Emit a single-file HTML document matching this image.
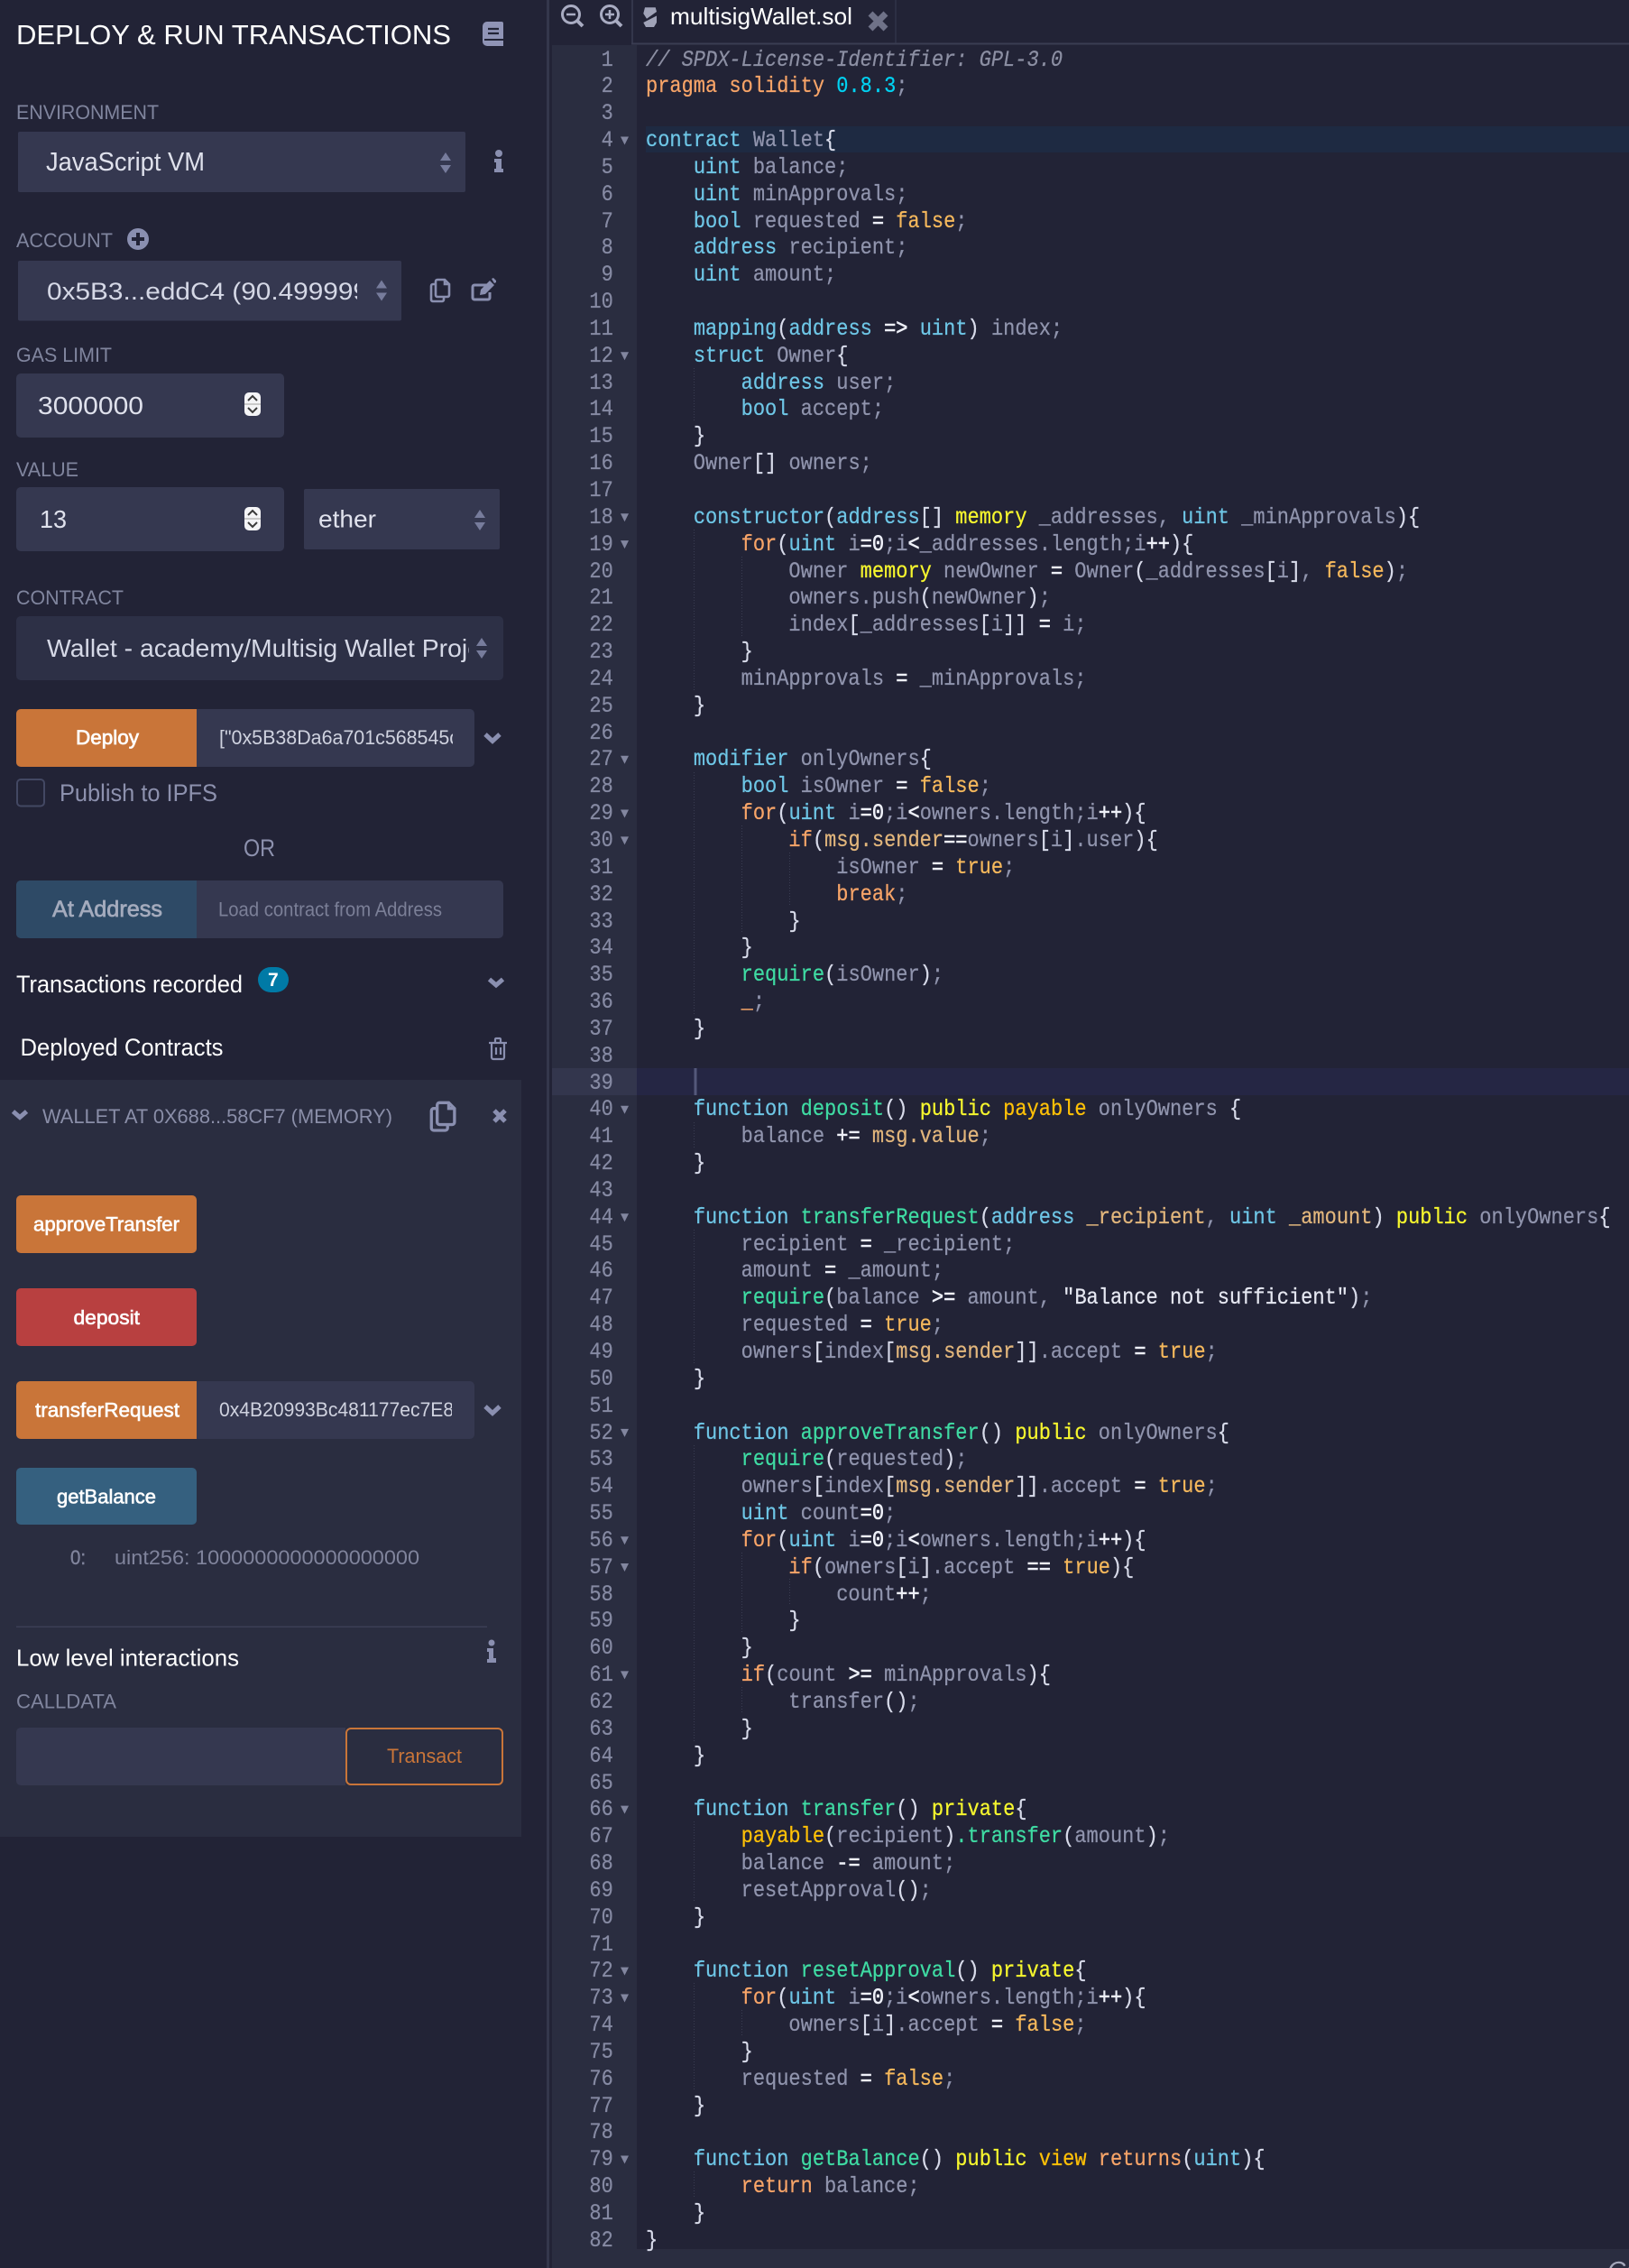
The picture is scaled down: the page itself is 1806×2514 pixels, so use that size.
<!DOCTYPE html>
<html><head><meta charset="utf-8"><title>Remix</title>
<style>
html,body{margin:0;padding:0;background:#222336}
body{position:relative;width:1806px;height:2514px;overflow:hidden}
svg.ui{position:absolute;left:0;top:0}
svg.ui text{font-family:"Liberation Sans",sans-serif;white-space:pre}
pre{margin:0;position:absolute;font:25px/29.84px "Liberation Mono",monospace;color:#9094ad;-webkit-text-stroke:.25px currentColor;transform-origin:0 0;transform:scaleX(.88)}
#code{left:716px;top:51.5px}
#nums{left:620px;top:51.5px;width:68px;text-align:right;color:#868aa3}
k{color:#6ec6e6}w{color:#d8dbea}o{color:#eef0f8;-webkit-text-stroke:.6px currentColor}f{color:#f5b85c}y{color:#f6f62e}z{color:#ffc107}g{color:#3fdba3}r{color:#f7a468}c{color:#00d2f2}t{color:#e2b67c}i{color:#8c8fa3;font-style:italic}s{color:#e6e8f2;text-decoration:none}
</style></head><body>
<svg class="ui" width="1806" height="2514" viewBox="0 0 1806 2514" xmlns="http://www.w3.org/2000/svg">
<defs>
<clipPath id="c1"><rect x="40" y="290" width="356" height="60"/></clipPath>
<clipPath id="c2"><rect x="40" y="690" width="480" height="60"/></clipPath>
<clipPath id="c3"><rect x="240" y="790" width="262" height="60"/></clipPath>
<clipPath id="c4"><rect x="240" y="1535" width="261" height="60"/></clipPath>
<g id="copy" fill="none" stroke="#8a8fb0" stroke-width="2.6"><path d="M8 1h8l5 5v12a2 2 0 0 1-2 2H8a2 2 0 0 1-2-2V3a2 2 0 0 1 2-2z"/><path d="M6 6H3a2 2 0 0 0-2 2v15a2 2 0 0 0 2 2h10a2 2 0 0 0 2-2v-3"/><path d="M16 1v5h5"/></g>
<g id="ud"><path d="M6 0l6 9H0z M0 14h12l-6 9z" fill="#777c9c"/></g>
<g id="spin"><rect width="18" height="26" rx="5" fill="#f4f4f6"/><path d="M4 9l5-5 5 5M4 17l5 5 5-5" fill="none" stroke="#3a3a3a" stroke-width="2"/><path d="M0 13h18" stroke="#bbb" stroke-width="1.5"/></g>
</defs>

<!-- panel -->
<rect x="0" y="1197" width="578" height="839" fill="#2a2d40"/>

<!-- title -->
<text x="18" y="49" font-size="31" fill="#fff" textLength="482" lengthAdjust="spacingAndGlyphs">DEPLOY &amp; RUN TRANSACTIONS</text>
<path d="M540 24h16a2 2 0 0 1 2 2v25h-18a5 5 0 0 1-5-5V29a5 5 0 0 1 5-5z" fill="#9094b6"/>
<path d="M541 32h12M541 37h12" stroke="#222336" stroke-width="2.2"/><path d="M537 44h21" stroke="#222336" stroke-width="2"/>

<!-- environment -->
<text x="18" y="132" font-size="22" fill="#80859e" textLength="158" lengthAdjust="spacingAndGlyphs">ENVIRONMENT</text>
<rect x="20" y="146" width="496" height="67" rx="2" fill="#353850"/>
<text x="51" y="189" font-size="28.5" fill="#dfe1ec" textLength="176" lengthAdjust="spacingAndGlyphs">JavaScript VM</text>
<use href="#ud" x="488" y="169"/>
<circle cx="553" cy="170" r="4" fill="#8a8fb0"/><path d="M548 176h8v11h2v4h-10v-4h2v-7h-2z" fill="#8a8fb0"/>

<!-- account -->
<text x="18" y="274" font-size="22" fill="#80859e" textLength="107" lengthAdjust="spacingAndGlyphs">ACCOUNT</text>
<circle cx="153" cy="265" r="12" fill="#8a8fb0"/><path d="M146 265h14M153 258v14" stroke="#222336" stroke-width="4"/>
<rect x="20" y="289" width="425" height="66.5" rx="2" fill="#353850"/>
<text x="52" y="332" font-size="27" fill="#d5d8e6" clip-path="url(#c1)" textLength="356" lengthAdjust="spacingAndGlyphs">0x5B3...eddC4 (90.499999</text>
<use href="#ud" x="417" y="310.5"/>
<use href="#copy" x="477" y="309"/>
<path d="M541 316h-15a2 2 0 0 0-2 2v12a2 2 0 0 0 2 2h15a2 2 0 0 0 2-2v-6" fill="none" stroke="#8a8fb0" stroke-width="3"/>
<path d="M532 327l1-6 10-10 5 5-10 10zM545 309l2-1 3 3 0 2-2 1z" fill="#8a8fb0"/>

<!-- gas -->
<text x="18" y="401" font-size="22" fill="#80859e" textLength="106" lengthAdjust="spacingAndGlyphs">GAS LIMIT</text>
<rect x="18" y="414" width="297" height="71" rx="5" fill="#353850"/>
<text x="42" y="459" font-size="28" fill="#dfe1ec" textLength="117" lengthAdjust="spacingAndGlyphs">3000000</text>
<use href="#spin" x="271" y="435"/>

<!-- value -->
<text x="18" y="528" font-size="22" fill="#80859e" textLength="69" lengthAdjust="spacingAndGlyphs">VALUE</text>
<rect x="18" y="540" width="297" height="71" rx="5" fill="#353850"/>
<text x="44" y="585" font-size="28" fill="#dfe1ec" textLength="30" lengthAdjust="spacingAndGlyphs">13</text>
<use href="#spin" x="271" y="562"/>
<rect x="337" y="542" width="217" height="67" rx="2" fill="#353850"/>
<text x="353" y="584.5" font-size="27" fill="#dfe1ec" textLength="64" lengthAdjust="spacingAndGlyphs">ether</text>
<use href="#ud" x="526" y="565"/>

<!-- contract -->
<text x="18" y="670" font-size="22" fill="#80859e" textLength="119" lengthAdjust="spacingAndGlyphs">CONTRACT</text>
<rect x="18" y="683" width="540" height="71" rx="5" fill="#2d3046"/>
<text x="52" y="728" font-size="28" fill="#d5d8e6" clip-path="url(#c2)" textLength="482" lengthAdjust="spacingAndGlyphs">Wallet - academy/Multisig Wallet Proje</text>
<use href="#ud" x="528" y="707"/>

<!-- deploy -->
<rect x="18" y="786" width="508" height="64" rx="5" fill="#353850"/>
<path d="M23 786h195v64H23a5 5 0 0 1-5-5v-54a5 5 0 0 1 5-5z" fill="#c97539"/>
<text x="84" y="825" font-size="22.5" fill="#fff" stroke="#fff" stroke-width=".7" textLength="70" lengthAdjust="spacingAndGlyphs">Deploy</text>
<text x="243" y="825" font-size="22" fill="#cfd2df" clip-path="url(#c3)" textLength="266" lengthAdjust="spacingAndGlyphs">["0x5B38Da6a701c568545c</text>
<path d="M538 814l8 7.500 8-7.500" fill="none" stroke="#8a8fb0" stroke-width="5"/>

<rect x="19" y="864" width="30" height="29.5" rx="4" fill="none" stroke="#434863" stroke-width="2"/>
<text x="66" y="888" font-size="27" fill="#8d91ae" textLength="175" lengthAdjust="spacingAndGlyphs">Publish to IPFS</text>
<text x="270" y="949" font-size="27" fill="#8d91ae" textLength="35" lengthAdjust="spacingAndGlyphs">OR</text>

<!-- at address -->
<rect x="18" y="976" width="540" height="64" rx="5" fill="#353850"/>
<path d="M23 976h195v64H23a5 5 0 0 1-5-5v-54a5 5 0 0 1 5-5z" fill="#2e4a66"/>
<text x="58" y="1016" font-size="25" fill="#a4abbd" stroke="#a4abbd" stroke-width=".7" textLength="122" lengthAdjust="spacingAndGlyphs">At Address</text>
<text x="242" y="1015.5" font-size="22" fill="#7b7f97" textLength="248" lengthAdjust="spacingAndGlyphs">Load contract from Address</text>

<!-- transactions -->
<text x="18" y="1100" font-size="27" fill="#fff" textLength="251" lengthAdjust="spacingAndGlyphs">Transactions recorded</text>
<rect x="286" y="1072" width="34" height="28" rx="14" fill="#007aa6"/>
<text x="297" y="1093" font-size="21" font-weight="bold" fill="#fff">7</text>
<path d="M542.500 1085.500l7.500 6.500 7.500-6.500" fill="none" stroke="#8a8fb0" stroke-width="5"/>

<text x="22.5" y="1170" font-size="27" fill="#fff" textLength="225" lengthAdjust="spacingAndGlyphs">Deployed Contracts</text>
<path d="M542 1156h20M549 1156v-4a1 1 0 0 1 1-1h4a1 1 0 0 1 1 1v4M545 1156v16a2 2 0 0 0 2 2h10a2 2 0 0 0 2-2v-16M550 1161v8M555 1161v8" fill="none" stroke="#8a8fb0" stroke-width="2.2"/>

<!-- wallet header -->
<path d="M14.500 1232l7.500 6.500 7.500-6.500" fill="none" stroke="#8a8fb0" stroke-width="5"/>
<text x="47" y="1245" font-size="22" fill="#8a8ea8" textLength="388" lengthAdjust="spacingAndGlyphs">WALLET AT 0X688...58CF7 (MEMORY)</text>
<use href="#copy" transform="translate(477 1221) scale(1.28)"/>
<path d="M548 1231l12 12M560 1231l-12 12" stroke="#8a8fb0" stroke-width="5"/>

<!-- function buttons -->
<rect x="18" y="1325" width="200" height="64" rx="5" fill="#c97539"/>
<text x="37" y="1364.500" font-size="22" fill="#fff" stroke="#fff" stroke-width=".6" textLength="162" lengthAdjust="spacingAndGlyphs">approveTransfer</text>
<rect x="18" y="1428" width="200" height="64" rx="5" fill="#b84040"/>
<text x="81.5" y="1468" font-size="22" fill="#fff" stroke="#fff" stroke-width=".6" textLength="73.500" lengthAdjust="spacingAndGlyphs">deposit</text>
<rect x="18" y="1531" width="508" height="64" rx="5" fill="#353850"/>
<path d="M23 1531h195v64H23a5 5 0 0 1-5-5v-54a5 5 0 0 1 5-5z" fill="#c97539"/>
<text x="39" y="1570.500" font-size="22" fill="#fff" stroke="#fff" stroke-width=".6" textLength="160" lengthAdjust="spacingAndGlyphs">transferRequest</text>
<text x="243" y="1570" font-size="22" fill="#cfd2df" clip-path="url(#c4)" textLength="266" lengthAdjust="spacingAndGlyphs">0x4B20993Bc481177ec7E8f</text>
<path d="M538 1559l8 7.500 8-7.500" fill="none" stroke="#8a8fb0" stroke-width="5"/>
<rect x="18" y="1627" width="200" height="63" rx="5" fill="#35607f"/>
<text x="63" y="1666.500" font-size="22" fill="#fff" stroke="#fff" stroke-width=".6" textLength="110" lengthAdjust="spacingAndGlyphs">getBalance</text>
<text x="78" y="1734" font-size="22" fill="#80849c" stroke="#80849c" stroke-width=".4" textLength="17" lengthAdjust="spacingAndGlyphs">0:</text>
<text x="127" y="1734" font-size="22" fill="#80849c" textLength="338" lengthAdjust="spacingAndGlyphs">uint256: 1000000000000000000</text>

<rect x="18" y="1802.500" width="522" height="1.500" fill="#3c3f55"/>
<text x="18" y="1846.500" font-size="26" fill="#fff" textLength="247" lengthAdjust="spacingAndGlyphs">Low level interactions</text>
<circle cx="545" cy="1821" r="3.500" fill="#8a8fb0"/><path d="M540 1827h7v11h3v5h-10v-4h2v-8h-2z" fill="#8a8fb0"/>
<text x="18" y="1893.500" font-size="22" fill="#80859e" textLength="111" lengthAdjust="spacingAndGlyphs">CALLDATA</text>
<path d="M23 1915h360v64H23a5 5 0 0 1-5-5v-54a5 5 0 0 1 5-5z" fill="#353850"/>
<rect x="384" y="1916" width="173" height="62" rx="5" fill="#2a2d40" stroke="#c97539" stroke-width="2"/>
<text x="429" y="1954" font-size="22" fill="#c97539" textLength="83" lengthAdjust="spacingAndGlyphs">Transact</text>

<!-- editor chrome -->
<rect x="606" y="0" width="3" height="2514" fill="#34374c"/>
<rect x="612" y="50" width="94" height="2464" fill="#2a2d40"/>
<rect x="612" y="2493" width="1194" height="21" fill="#2a2d40"/>
<text x="1782" y="2526" font-size="28" font-style="italic" fill="#a4a7ba">Ca</text>
<rect x="700" y="0" width="2" height="49" fill="#33364b"/>
<rect x="992" y="0" width="2" height="49" fill="#2c2f44"/>
<rect x="700" y="47.500" width="1106" height="2" fill="#3a3d52"/>
<g fill="none" stroke="#a9acc2" stroke-width="3">
<circle cx="633" cy="16" r="9.500"/><path d="M640 23l6 6" stroke-width="4"/><path d="M628 16h10" stroke-width="2.500"/>
<circle cx="676" cy="16" r="9.500"/><path d="M683 23l6 6" stroke-width="4"/><path d="M671 16h10M676 11v10" stroke-width="2.500"/>
</g>
<path d="M715 8.300h11.700l1.300 4.700-11 7.700-3.700-5.700zM713.300 25l14.700-7.500v7.500l-3 5h-9z" fill="#a0a3b8"/>
<text x="743" y="27" font-size="26" fill="#fff" textLength="202" lengthAdjust="spacingAndGlyphs">multisigWallet.sol</text>
<path d="M965 15l17 17M982 15l-17 17" stroke="#6f7288" stroke-width="7"/>

<!-- highlights -->
<rect x="716" y="140" width="1090" height="29" fill="#1e2a42"/>
<rect x="612" y="1184" width="94" height="30" fill="#33364d"/>
<rect x="706" y="1184" width="1100" height="30" fill="#26284a" fill-opacity=".7"/>
<rect x="769.500" y="1184" width="3" height="30" fill="#54587a"/>

<!-- indent guides -->
<g stroke="#3a3d52" stroke-width="1" stroke-dasharray="1 2">
<path d="M769.500 408V468M769.500 587V766M769.500 856V1124M769.500 1244V1273M769.500 1363V1512M769.500 1602V1930M769.500 2019V2109M769.500 2198V2318M769.500 2407V2437"/>
<path d="M822.500 617V706M822.500 915V1035M822.500 1721V1810M822.500 1870V1900M822.500 2228V2258"/>
<path d="M875.500 945V1005M875.500 1750V1780"/>
</g>

<!-- fold arrows -->
<g fill="#82869f"><path d="M688 151.500h9l-4.500 9zM688 390.200h9l-4.500 9zM688 569.300h9l-4.500 9zM688 599.100h9l-4.500 9zM688 837.800h9l-4.500 9zM688 897.500h9l-4.500 9zM688 927.400h9l-4.500 9zM688 1225.800h9l-4.500 9zM688 1345.200h9l-4.500 9zM688 1583.900h9l-4.500 9zM688 1703.200h9l-4.500 9zM688 1733h9l-4.500 9zM688 1852.400h9l-4.500 9zM688 2001.600h9l-4.500 9zM688 2180.600h9l-4.500 9zM688 2210.500h9l-4.500 9zM688 2389.500h9l-4.500 9z"/></g>
</svg>

<pre id="nums">1
2
3
4
5
6
7
8
9
10
11
12
13
14
15
16
17
18
19
20
21
22
23
24
25
26
27
28
29
30
31
32
33
34
35
36
37
38
39
40
41
42
43
44
45
46
47
48
49
50
51
52
53
54
55
56
57
58
59
60
61
62
63
64
65
66
67
68
69
70
71
72
73
74
75
76
77
78
79
80
81
82</pre>

<pre id="code"><i>// SPDX-License-Identifier: GPL-3.0</i>
<r>pragma solidity</r> <c>0.8.3</c>;

<k>contract</k> Wallet<w>{</w>
    <k>uint</k> balance;
    <k>uint</k> minApprovals;
    <k>bool</k> requested <o>=</o> <f>false</f>;
    <k>address</k> recipient;
    <k>uint</k> amount;

    <k>mapping</k><w>(</w><k>address</k> <o>=&gt;</o> <k>uint</k><w>)</w> index;
    <k>struct</k> Owner<w>{</w>
        <k>address</k> user;
        <k>bool</k> accept;
    <w>}</w>
    Owner<w>[]</w> owners;

    <k>constructor</k><w>(</w><k>address</k><w>[]</w> <y>memory</y> _addresses, <k>uint</k> _minApprovals<w>){</w>
        <r>for</r><w>(</w><k>uint</k> i<o>=0</o>;i<o>&lt;</o>_addresses.length;i<o>++</o><w>){</w>
            Owner <y>memory</y> newOwner <o>=</o> Owner<w>(</w>_addresses<w>[</w>i<w>]</w>, <f>false</f><w>)</w>;
            owners.push<w>(</w>newOwner<w>)</w>;
            index<w>[</w>_addresses<w>[</w>i<w>]]</w> <o>=</o> i;
        <w>}</w>
        minApprovals <o>=</o> _minApprovals;
    <w>}</w>

    <k>modifier</k> onlyOwners<w>{</w>
        <k>bool</k> isOwner <o>=</o> <f>false</f>;
        <r>for</r><w>(</w><k>uint</k> i<o>=0</o>;i<o>&lt;</o>owners.length;i<o>++</o><w>){</w>
            <r>if</r><w>(</w><t>msg.sender</t><o>==</o>owners<w>[</w>i<w>]</w>.user<w>){</w>
                isOwner <o>=</o> <f>true</f>;
                <r>break</r>;
            <w>}</w>
        <w>}</w>
        <g>require</g><w>(</w>isOwner<w>)</w>;
        <r>_</r>;
    <w>}</w>


    <k>function</k> <g>deposit</g><w>()</w> <y>public</y> <z>payable</z> onlyOwners <w>{</w>
        balance <o>+=</o> <t>msg.value</t>;
    <w>}</w>

    <k>function</k> <g>transferRequest</g><w>(</w><k>address</k> <t>_recipient</t>, <k>uint</k> <t>_amount</t><w>)</w> <y>public</y> onlyOwners<w>{</w>
        recipient <o>=</o> _recipient;
        amount <o>=</o> _amount;
        <g>require</g><w>(</w>balance <o>&gt;=</o> amount, <s>"Balance not sufficient"</s><w>)</w>;
        requested <o>=</o> <f>true</f>;
        owners<w>[</w>index<w>[</w><t>msg.sender</t><w>]]</w>.accept <o>=</o> <f>true</f>;
    <w>}</w>

    <k>function</k> <g>approveTransfer</g><w>()</w> <y>public</y> onlyOwners<w>{</w>
        <g>require</g><w>(</w>requested<w>)</w>;
        owners<w>[</w>index<w>[</w><t>msg.sender</t><w>]]</w>.accept <o>=</o> <f>true</f>;
        <k>uint</k> count<o>=0</o>;
        <r>for</r><w>(</w><k>uint</k> i<o>=0</o>;i<o>&lt;</o>owners.length;i<o>++</o><w>){</w>
            <r>if</r><w>(</w>owners<w>[</w>i<w>]</w>.accept <o>==</o> <f>true</f><w>){</w>
                count<o>++</o>;
            <w>}</w>
        <w>}</w>
        <r>if</r><w>(</w>count <o>&gt;=</o> minApprovals<w>){</w>
            transfer<w>()</w>;
        <w>}</w>
    <w>}</w>

    <k>function</k> <g>transfer</g><w>()</w> <y>private</y><w>{</w>
        <z>payable</z><w>(</w>recipient<w>)</w><g>.transfer</g><w>(</w>amount<w>)</w>;
        balance <o>-=</o> amount;
        resetApproval<w>()</w>;
    <w>}</w>

    <k>function</k> <g>resetApproval</g><w>()</w> <y>private</y><w>{</w>
        <r>for</r><w>(</w><k>uint</k> i<o>=0</o>;i<o>&lt;</o>owners.length;i<o>++</o><w>){</w>
            owners<w>[</w>i<w>]</w>.accept <o>=</o> <f>false</f>;
        <w>}</w>
        requested <o>=</o> <f>false</f>;
    <w>}</w>

    <k>function</k> <g>getBalance</g><w>()</w> <y>public</y> <z>view</z> <r>returns</r><w>(</w><k>uint</k><w>){</w>
        <r>return</r> balance;
    <w>}</w>
<w>}</w></pre>
</body></html>
